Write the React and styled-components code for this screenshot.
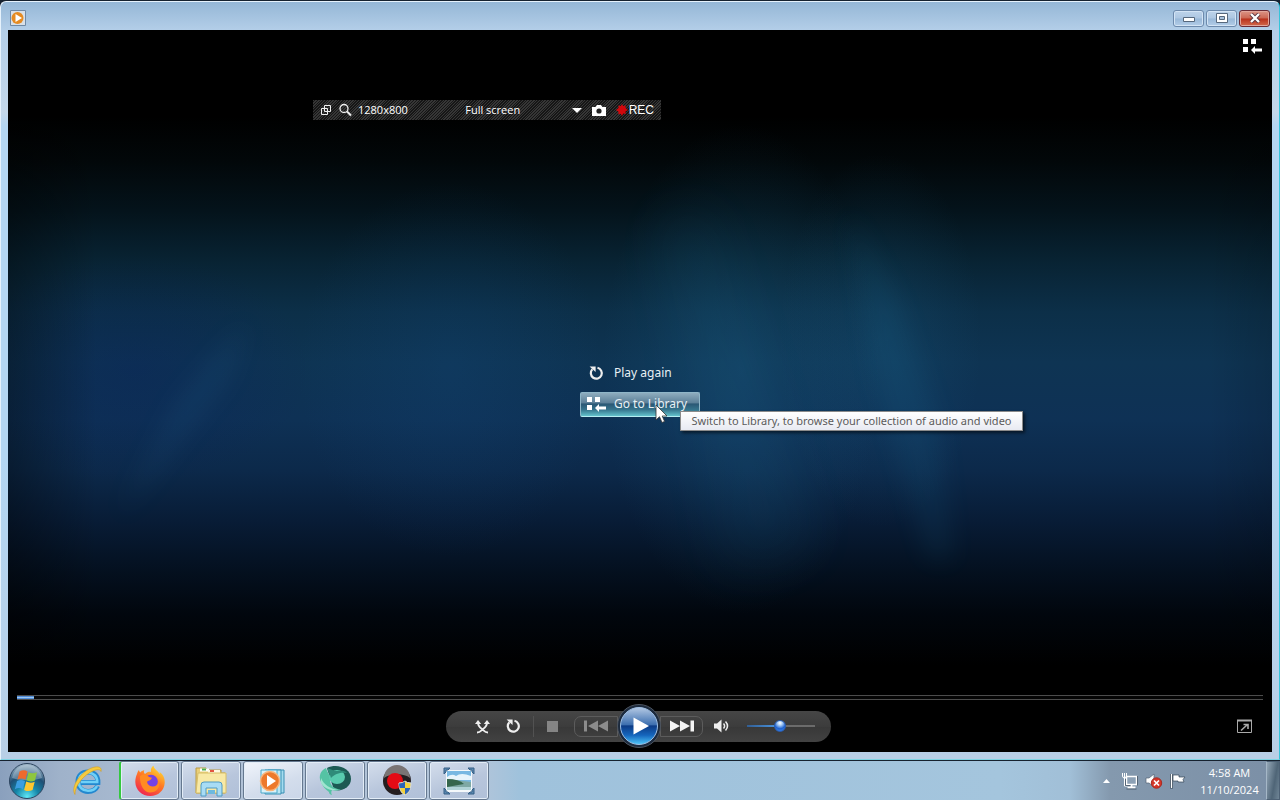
import React from "react";
import styled, { createGlobalStyle } from "styled-components";

const GlobalStyle = createGlobalStyle`
  *, *::before, *::after { box-sizing: border-box; }
  body { margin: 0; background: #1a2432; font-family: "Open Sans", "Noto Sans", sans-serif; }
  button, select, input { font: inherit; color: inherit; }
  button { border: 0; padding: 0; background: none; display: inline-flex; align-items: center; justify-content: center; }
  svg { display: block; flex: none; }
`;

const Desktop = styled.div`
  min-height: 100vh;
  display: flex;
  flex-direction: column;
  background: #16222f;
`;

const Window = styled.main`
  position: relative;
  flex: 1;
  display: flex;
  flex-direction: column;
  margin: 1px 0;
  border: 1px solid #e6f2fc;
  border-right-color: #35c4da;
  border-bottom-color: #7fd4e4;
  border-radius: 6px 6px 0 0;
  padding: 0 7px 7px;
  background: linear-gradient(#95b7d6, #b3cee8 28px, #c4d8ea 110px, #b4d6f2 124px, #b4d6f2 60%, #b8cfe6);
`;

const TitleBar = styled.header`
  display: flex;
  align-items: center;
  justify-content: space-between;
  height: 28px;
  padding: 4px 2px 0;
`;

const CaptionButtons = styled.div`
  display: flex;
  gap: 2px;
`;

const CaptionButton = styled.button`
  width: 31px;
  height: 17px;
  border: 1px solid ${(p) => (p.$close ? "#6b2b35" : "#6d8aac")};
  border-radius: 3px;
  box-shadow: inset 0 0 0 1px ${(p) => (p.$close ? "#e2a69b" : "#d3e4f5")};
  background: ${(p) =>
    p.$close
      ? "linear-gradient(#dc9586, #cc6753 48%, #b9301b 52%, #d26a4c)"
      : "linear-gradient(#bdd3ea, #adc7e2 48%, #98b8d8 52%, #b3cde8)"};
`;

const Player = styled.section`
  position: relative;
  flex: 1;
  display: flex;
  flex-direction: column;
  color: #fff;
  background:
    linear-gradient(90deg, rgba(0, 0, 0, 0.35), transparent 7%, transparent 95%, rgba(0, 0, 0, 0.12)),
    radial-gradient(ellipse 11% 34% at 58% 47%, rgba(30, 105, 145, 0.26), transparent),
    radial-gradient(ellipse 8% 26% at 69% 43%, rgba(30, 105, 150, 0.2), transparent),
    radial-gradient(ellipse 12% 26% at 35% 47%, rgba(18, 72, 125, 0.25), transparent),
    radial-gradient(ellipse 14% 16% at 10% 47%, rgba(8, 28, 92, 0.3), transparent),
    linear-gradient(
      #000 0, #000 12%, #020709 18%, #04131b 25%, #082333 32%, #0c2f48 39%,
      #0e3453 46%, #0e3155 54%, #0c294a 61%, #081c36 68%, #04101f 75%,
      #01060d 81%, #000 88%
    );
`;

const Beams = styled.svg`
  position: absolute;
  inset: 0;
  width: 100%;
  height: 100%;
  pointer-events: none;
`;

const PlayerTop = styled.div`
  display: flex;
  justify-content: flex-end;
  padding: 8px 10px 0;
`;

const Stage = styled.div`
  flex: 1;
  display: flex;
  align-items: center;
  justify-content: center;
  padding-top: 28px;
`;

const EndMenu = styled.nav`
  position: relative;
  display: flex;
  flex-direction: column;
  gap: 6px;
  width: 120px;
`;

const EndMenuItem = styled.button`
  justify-content: flex-start;
  gap: 8px;
  height: 25px;
  padding: 0 0 0 6px;
  border-radius: 2px;
  font-family: "Noto Sans", sans-serif;
  font-size: 12px;
  line-height: 16px;
  white-space: nowrap;
  color: #e8f0f5;
  ${(p) =>
    p.$active &&
    `
    border: 1px solid #8fb6c8;
    border-bottom-color: #b5eef2;
    padding-left: 5px;
    background: linear-gradient(#8eacbe, #5d8199 42%, #2b5875 48%, #35738c 72%, #63c2cc);
  `}
`;

const Slot = styled.span`
  display: flex;
  justify-content: center;
  width: 20px;
`;

const Tooltip = styled.div`
  position: absolute;
  left: 100px;
  top: 50px;
  height: 20px;
  min-width: 343px;
  padding: 0 6px;
  border: 1px solid #8b8b8b;
  background: linear-gradient(#fff, #e8eaf2);
  box-shadow: 2px 2px 3px rgba(0, 0, 0, 0.55);
  color: #5b5b5b;
  font-family: "Noto Sans", sans-serif;
  font-size: 11px;
  line-height: 18px;
  text-align: center;
  white-space: nowrap;
`;

const Pointer = styled.svg`
  position: absolute;
  left: 75px;
  top: 43px;
`;

const Recorder = styled.div`
  position: absolute;
  left: 305px;
  top: 70px;
  display: flex;
  align-items: center;
  width: 348px;
  height: 20px;
  padding: 0 7px;
  gap: 10px;
  font-size: 11px;
  line-height: 16px;
  background: repeating-linear-gradient(135deg, #363636 0 1px, #161616 1px 2px);
`;

const RecorderSize = styled.div`
  display: flex;
  align-items: center;
  gap: 6px;
`;

const Picker = styled.label`
  position: relative;
  flex: 1;
  display: flex;
  align-items: center;
`;

const Select = styled.select`
  flex: 1;
  height: 18px;
  border: 0;
  padding: 0 4px 0 0;
  appearance: none;
  background: transparent;
  text-align: center;
  text-align-last: center;
`;

const RecordButton = styled.button`
  gap: 1px;
  font-family: "Liberation Sans", sans-serif;
  font-size: 12px;
`;

const Seek = styled.input`
  display: block;
  appearance: none;
  height: 5px;
  margin: 0 9px;
  border: solid #4c4c4c;
  border-width: 1px 0;
  background: linear-gradient(#2b6cc4, #9cc8f4 50%, #2f74cf) 0 0 / 17px 100% no-repeat, #050505;
  &::-webkit-slider-thumb { appearance: none; width: 1px; height: 1px; }
`;

const ControlRow = styled.footer`
  display: grid;
  grid-template-columns: 1fr auto 1fr;
  align-items: center;
  height: 52px;
  padding: 0 20px 0 17px;
`;

const Transport = styled.div`
  grid-column: 2;
  display: flex;
  align-items: center;
  width: 385px;
  height: 31px;
  padding: 0 16px 0 27px;
  border-radius: 16px;
  background: linear-gradient(#464646, #3c3c3c 50%, #383838 51%, #424242);
`;

const Control = styled.button`
  width: ${(p) => p.$width || 31}px;
  height: 21px;
`;

const Divider = styled.span`
  width: 1px;
  height: 21px;
  margin: 0 3px 0 1px;
  background: #525252;
`;

const SkipControl = styled(Control)`
  width: 44px;
  margin-left: ${(p) => (p.$next ? 0 : 6)}px;
  border: 1px solid #5c5c5c;
  border-radius: ${(p) => (p.$next ? "0 7px 7px 0" : "7px 0 0 7px")};
`;

const PlayControl = styled.button`
  width: 44px;
  height: 44px;
  margin: 0 -1px;
  border-radius: 50%;
  z-index: 1;
`;

const Volume = styled.input`
  appearance: none;
  width: 68px;
  height: 12px;
  margin: 0 0 0 8px;
  background: linear-gradient(90deg, #315e94, #4e9be8 50%, #6b6b6b 50%) center / 100% 2px no-repeat;
  &::-webkit-slider-thumb {
    appearance: none;
    width: 12px;
    height: 12px;
    border: 1px solid #2a5cae;
    border-radius: 50%;
    background: radial-gradient(circle at 50% 20%, #fff 0, #a9cdf5 25%, #1f62d0 60%, #3f8cf0);
  }
`;

const FullscreenButton = styled.button`
  justify-self: end;
`;

const Taskbar = styled.footer`
  display: flex;
  align-items: center;
  height: 39px;
  background: linear-gradient(90deg, #8aa0bd, #9fb2ca 60px, #b0c1d6 200px, #b2c5da 480px, #9fc2dc 520px, #a4c5dd 1000px, #a1bfd7 1070px, #8499ae 1110px, #7b8fa6);
`;

const StartButton = styled.button`
  width: 54px;
  height: 39px;
`;

const TaskButtons = styled.nav`
  flex: 1;
  display: flex;
  gap: 2px;
  padding-left: 3px;
`;

const TaskButton = styled.button`
  width: 60px;
  height: 39px;
  border-radius: 3px;
  ${(p) =>
    p.$open &&
    `
    border: 1px solid #65788f;
    box-shadow: inset 0 0 0 1px #e3edf7;
    background: linear-gradient(160deg, #d4deec, #b8c6dc 55%, #b0c0d8);
  `}
  ${(p) => p.$active && `background: linear-gradient(160deg, #f1f5fb, #d3ddec 60%, #cad6e8);`}
  ${(p) => p.$progress && `border-left: 2px solid #35c840;`}
`;

const Tray = styled.div`
  display: flex;
  align-items: center;
  gap: 7px;
`;

const TrayExpander = styled.button`
  width: 7px;
  height: 20px;
  margin-right: 4px;
`;

const Glyph = styled.span`
  display: flex;
  justify-content: center;
  width: 17px;
`;

const Clock = styled.time`
  width: 73px;
  text-align: center;
  color: #fff;
  font-size: 11px;
  line-height: 17px;
  white-space: nowrap;
`;

const ShowDesktop = styled.button`
  align-self: stretch;
  width: 14px;
  border: 1px solid #4d6175;
  border-left-color: #a5b7c7;
  background: linear-gradient(100deg, #93a6b6, #4f6577 60%, #6f8596);
`;

const LibraryIcon = () => (
  <svg width="20" height="16" viewBox="0 0 20 16" fill="#fff">
    <path d="M1 1h5v5H1zM9 1h5v5H9zM1 9h5v5H1zM9 12l4-4v2.500h7v3h-7V16z" />
  </svg>
);

const RepeatIcon = () => (
  <svg width="16" height="16" viewBox="0 0 16 16" fill="none" stroke="#eee" strokeWidth="2.200">
    <path d="M9.500 2.800A5.500 5.500 0 1 1 4.400 4.300" />
    <path d="M1.600 1.600h6v5.500z" fill="#eee" stroke="none" />
  </svg>
);

const ShuffleIcon = () => (
  <svg width="15" height="15" viewBox="0 0 15 15" fill="none" stroke="#eee" strokeWidth="1.800">
    <path d="M3 3.500c0 3.500 1.500 4.800 4 6.500 2 1.500 2.500 3.500 6 3.500M12 3.500c0 3.500-1.500 4.800-4 6.500-2 1.500-2.500 3.500-6 3.500" />
    <path d="M0 5 3 1l3.200 4zM8.800 5 12 1l3 4z" fill="#eee" stroke="none" />
  </svg>
);

const PlayOrb = () => (
  <svg width="44" height="44" viewBox="0 0 44 44">
    <defs>
      <linearGradient id="orbFace" x1="0" y1="0" x2="0" y2="1">
        <stop offset="0" stopColor="#b4c9e4" />
        <stop offset=".46" stopColor="#3e70b0" />
        <stop offset=".5" stopColor="#0c3b86" />
        <stop offset=".75" stopColor="#1566bd" />
        <stop offset="1" stopColor="#50c8fa" />
      </linearGradient>
    </defs>
    <circle cx="22" cy="22" r="21.500" fill="#1c2a3d" stroke="#4d5560" />
    <circle cx="22" cy="22" r="18.500" fill="url(#orbFace)" stroke="#9ebfe5" />
    <path d="M16.500 13.500v17L32 22z" fill="#fff" />
  </svg>
);

const SkipIcon = ({ next }) => (
  <svg width="24" height="12" viewBox="0 0 24 12" fill={next ? "#f4f4f4" : "#8c8c8c"}>
    {next ? <path d="M0 .5 10 6 0 11.500zM10 .5 20 6l-10 5.500zM20.500.5H24v11h-3.500z" /> : <path d="M24 .5 14 6l10 5.500zM14 .5 4 6l10 5.500zM0 .5h3v11H0z" />}
  </svg>
);

const SpeakerIcon = () => (
  <svg width="16" height="14" viewBox="0 0 16 14" fill="#eee">
    <path d="M1 4.500h3L8.500.5v13L4 9.500H1z" />
    <path d="M10.500 4.500c1.300 1.500 1.300 3.500 0 5M12.500 2.500c2.400 2.700 2.400 6.300 0 9" fill="none" stroke="#eee" strokeWidth="1.500" />
  </svg>
);

const StartOrb = () => (
  <svg width="38" height="38" viewBox="0 0 38 38">
    <defs>
      <radialGradient id="startFace" cx=".5" cy=".95" r=".95">
        <stop offset="0" stopColor="#5fe8f6" />
        <stop offset=".35" stopColor="#1586a8" />
        <stop offset=".65" stopColor="#1f4f74" />
        <stop offset="1" stopColor="#a9bfd0" />
      </radialGradient>
    </defs>
    <circle cx="19" cy="19" r="17.500" fill="url(#startFace)" stroke="#2d4560" />
    <path d="M4 16C6 7 12 3 19 3s13 4 15 13c-9 3-21 3-30 0z" fill="#dce8ef" opacity=".34" />
    <path d="M11.500 9.500q4.500-2.400 8 0l-2.100 8.200q-4-2.200-8 0z" fill="#ee6a2d" />
    <path d="M20.500 10.300q4 2 8.500 0L27 18.500q-4.400 2-8.500-.2z" fill="#8ec63e" />
    <path d="M9 19q4-2 8 0l-2.100 8.200q-4-2.200-8 0z" fill="#3b9ee0" />
    <path d="M18.200 19.600q4.200 2.200 8.500.2L24.600 28q-4.400 2.200-8.500-.1z" fill="#fdc72f" />
  </svg>
);

const ExplorerEIcon = () => (
  <svg width="32" height="32" viewBox="0 0 32 32" fill="none">
    <path d="M26.500 21c-1.600 3.500-4.900 5.500-9.500 5.500-5.800 0-10-4-10-10S11 7 17 7s10.200 4 9.900 10.500H10" stroke="#2388cf" strokeWidth="5" />
    <path d="M26 21c-1.600 3.200-4.500 4.800-9 4.800-5.300 0-9.300-3.600-9.300-9.300S11.500 7.700 17 7.700c5.600 0 9.400 3.600 9.200 9.300H10" stroke="#6fd0f7" strokeWidth="2.600" />
    <path d="M4 29.500C-1 22 10 6 22 2.500c5.400-1.500 9-.5 8 4-.5-2.200-3.500-2.400-7.500-.8C13 9.500 3.500 21 4 29.500z" fill="#f5cb3e" stroke="#d49c1e" strokeWidth=".6" />
  </svg>
);

const FirefoxIcon = () => (
  <svg width="32" height="32" viewBox="0 0 32 32">
    <defs>
      <linearGradient id="fox" x1=".8" y1="0" x2=".2" y2="1">
        <stop offset="0" stopColor="#ffe335" />
        <stop offset=".45" stopColor="#ff7b24" />
        <stop offset="1" stopColor="#ef1f55" />
      </linearGradient>
    </defs>
    <path d="M3 9c.6-2.300 1.500-3.400 2-4 .2 1.300.7 2 1.300 2.500 1-1.200 2.500-2 4-2.400C9.500 7 10 8.200 11 9c2-2 4-2.400 6-2.100C16.500 4.300 17.500 2 19.500.8c.5 3 2.500 4 4 5.400 1 .9 1.800 2 2.300 3.100.2-.7 0-1.600-.2-2.200C29 9.600 31 13 30.700 18c-.5 7.600-6.500 13-14.400 13C8 31 1.500 25 1.300 17 1.300 14 2 11 3 9z" fill="url(#fox)" />
    <circle cx="17" cy="16.500" r="6.800" fill="#7542e5" />
    <path d="M6 11c2.500-2.300 6-2 8 .3 1 1 2.600 1.200 4 1.400-1 2.600-3 2.600-4.600 3.600-1 2 1.800 5.200 5 5.200 3.600 0 5.600-2 6.500-4 1.300 6-3 10-8.800 10C10 27.500 5.600 20 6 11z" fill="#ff8b22" />
  </svg>
);

const FolderIcon = () => (
  <svg width="34" height="32" viewBox="0 0 34 32">
    <path d="M2 28V3h10l2 2h13v3h4v20z" fill="#e9cf78" stroke="#b89a42" />
    <path d="M6 3.500h9v3H6z" fill="#fff" />
    <path d="M8 3.500h4v2H8z" fill="#4caf50" />
    <path d="M14 5h12v3H14z" fill="#fff8df" />
    <path d="M16 5h4v2h-4z" fill="#e35540" />
    <path d="M4 8h28v20H2z" fill="#f8e9a5" stroke="#d7be69" />
    <path d="M7 31V20q0-3 3-3h15q3 0 3 3v11h-5v-8H12v8z" fill="#a8dcf5" stroke="#4e9ac4" />
    <path d="M14 25h7v4h-7z" fill="#6db9df" />
  </svg>
);

const MediaIcon = () => (
  <svg width="32" height="32" viewBox="0 0 32 32">
    <path d="M11 5h16v23H11z" fill="#a5dcef" stroke="#398fb3" />
    <path d="M8 5h16v24H8z" fill="#b9e7f5" stroke="#398fb3" />
    <path d="M4 5h16v23H4z" fill="#d9f2fa" stroke="#4ba8ca" />
    <circle cx="13" cy="16" r="9.500" fill="#ed792b" stroke="#f8b57c" strokeWidth="1.500" />
    <path d="M10 10v12l9-6z" fill="#fff" />
  </svg>
);

const TealIcon = () => (
  <svg width="34" height="34" viewBox="0 0 34 34">
    <path d="M9 4c10-5 24 0 24 11 0 8-9 13-17 11z" fill="#1c5a53" />
    <path d="M8 4C3 6 0 12 3 18c1.500 4 4 7 8 10 0 1.500 1 2.500 3 3-1-2-1-3 0-5 3 .8 6 .8 9-.5-7-.5-11-4-11-9.500C12 10 9 8 8 4z" fill="#55c3a4" />
    <path d="M3 14c3 7 9 11 18 12-6 1-14-.5-18-7z" fill="#9fe5cf" />
    <ellipse cx="19" cy="13" rx="8" ry="7" fill="#58cbae" />
    <path d="M9 4c4 1 7 3 10 3s7-1 10 2c-5-1-12 0-16 5-1-4-3-6-4-10z" fill="#2f8b79" />
  </svg>
);

const CaptureIcon = () => (
  <svg width="34" height="34" viewBox="0 0 34 34">
    <circle cx="17" cy="17" r="14" fill="#241e20" />
    <path d="M4 14a13 13 0 0 1 26 0C24 9 11 9 4 14z" fill="#7a7474" />
    <circle cx="15" cy="17" r="8" fill="#e40b15" />
    <path d="M19 19q4 0 6-2 2 2 6 2c0 6-2 10-6 12-4-2-6-6-6-12z" fill="#f4d33b" stroke="#d8dce0" />
    <path d="M25 17.500V24h-5.300c-.5-1.300-.7-3-.7-4.500q4 0 6-2zM25 24h5.300c-.9 3-2.500 5-5.300 6.500z" fill="#2a65bb" />
  </svg>
);

const PhotoIcon = () => (
  <svg width="32" height="28" viewBox="0 0 32 28">
    <path d="M3 3h26v22H3z" fill="#f4f8fa" />
    <path d="M4 4h24v19H4z" fill="#78b8e2" />
    <path d="M4 10q5-4 9-1 5-4 15 0v4H4z" fill="#e7f4fb" />
    <path d="M4 12q7 1 24 3v8H4z" fill="#7ea8a4" />
    <path d="M4 12q12 0 17 5L4 20z" fill="#35664c" />
    <path d="M4 20h24v3H4z" fill="#b2d4d8" />
    <path d="M1 7V1h6L5 3H3v2zM31 7V1h-6l2 2h2v2zM1 21v6h6l-2-2H3v-2zM31 21v6h-6l2-2h2v-2z" fill="#5c89b0" stroke="#345e85" />
  </svg>
);

const tasks = [
  { name: "Internet Explorer", Icon: ExplorerEIcon },
  { name: "Firefox", Icon: FirefoxIcon, open: true, progress: true },
  { name: "File Explorer", Icon: FolderIcon, open: true },
  { name: "Media Player", Icon: MediaIcon, open: true, active: true },
  { name: "Remote viewer", Icon: TealIcon, open: true },
  { name: "Screen recorder", Icon: CaptureIcon, open: true },
  { name: "Photos", Icon: PhotoIcon, open: true },
];

export default function App() {
  return (
    <Desktop>
      <GlobalStyle />
      <Window>
        <TitleBar>
          <svg width="16" height="16" viewBox="0 0 16 16">
            <path d="M.5.500h15v15H.500z" fill="#d8e0e8" stroke="#6f8aa6" />
            <circle cx="7.500" cy="8" r="6" fill="#e58b22" />
            <path d="M5.500 4v8l6.500-4z" fill="#fff" />
          </svg>
          <CaptionButtons>
            <CaptionButton aria-label="Minimize">
              <svg width="12" height="10" viewBox="0 0 12 10"><path d="M.5 4.500h11v4H.500z" fill="#fff" stroke="#56687d" /></svg>
            </CaptionButton>
            <CaptionButton aria-label="Maximize">
              <svg width="12" height="10" viewBox="0 0 12 10"><path d="M.5.500h11v9H.500z" fill="#fff" stroke="#56687d" /><path d="M3.500 3.500h5v3h-5z" fill="#a8c1db" stroke="#56687d" /></svg>
            </CaptionButton>
            <CaptionButton $close aria-label="Close">
              <svg width="12" height="10" viewBox="0 0 12 10"><path d="m2 1 8 8M10 1 2 9" stroke="#5a3540" strokeWidth="4" /><path d="m2 1 8 8M10 1 2 9" stroke="#fff" strokeWidth="2.300" /></svg>
            </CaptionButton>
          </CaptionButtons>
        </TitleBar>

        <Player>
          <Beams viewBox="0 0 1264 722" preserveAspectRatio="none">
            <defs>
              <filter id="soften" x="-60%" y="-30%" width="220%" height="160%"><feGaussianBlur stdDeviation="26" /></filter>
              <filter id="edge" x="-100%" y="-30%" width="300%" height="160%"><feGaussianBlur stdDeviation="12" /></filter>
            </defs>
            <path d="M650 190 700 180 810 520 720 540Z" fill="#2579a4" opacity=".08" filter="url(#soften)" />
            <path d="M840 180 890 270 930 390 945 530 920 530 865 340Z" fill="#2482ad" opacity=".1" filter="url(#edge)" />
            <path d="M240 290 220 350 110 490 170 370Z" fill="#2a7099" opacity=".14" filter="url(#edge)" />
          </Beams>
          <PlayerTop>
            <button aria-label="Switch to Library"><LibraryIcon /></button>
          </PlayerTop>
          <Stage>
            <EndMenu>
              <EndMenuItem><Slot><RepeatIcon /></Slot>Play again</EndMenuItem>
              <EndMenuItem $active><Slot><LibraryIcon /></Slot>Go to Library</EndMenuItem>
              <Tooltip role="tooltip">Switch to Library, to browse your collection of audio and video</Tooltip>
              <Pointer width="13" height="20" viewBox="0 0 13 20">
                <path d="M1 1v15l3.500-3.300L7 18.500l2.600-1.100L7.200 12H12z" fill="#fff" stroke="#333" strokeWidth=".8" />
              </Pointer>
            </EndMenu>
          </Stage>
          <Seek type="range" min="0" max="100" defaultValue="1" aria-label="Seek" />
          <ControlRow>
            <Transport>
              <Control $width={20} aria-label="Shuffle"><ShuffleIcon /></Control>
              <Control $width={40} aria-label="Repeat"><RepeatIcon /></Control>
              <Divider />
              <Control $width={31} aria-label="Stop">
                <svg width="11" height="11" viewBox="0 0 11 11"><path d="M0 0h11v11H0z" fill="#858585" /></svg>
              </Control>
              <SkipControl aria-label="Previous"><SkipIcon /></SkipControl>
              <PlayControl aria-label="Play"><PlayOrb /></PlayControl>
              <SkipControl $next aria-label="Next"><SkipIcon next /></SkipControl>
              <Control $width={36} aria-label="Mute"><SpeakerIcon /></Control>
              <Volume type="range" min="0" max="100" defaultValue="49" aria-label="Volume" />
            </Transport>
            <FullscreenButton aria-label="View full screen">
              <svg width="15" height="14" viewBox="0 0 15 14" fill="none" stroke="#aaa">
                <path d="M.5 1.500h14v12H.500z" />
                <path d="M0 1.500h15" strokeWidth="2" />
                <path d="M4 11.500 10 6M6.500 5.500H11V10" strokeWidth="1.600" />
              </svg>
            </FullscreenButton>
          </ControlRow>

          <Recorder>
            <RecorderSize>
              <svg width="12" height="12" viewBox="0 0 12 12" fill="none" stroke="#eee"><path d="M4.500 1.500h6v6h-6zM1.500 4.500h6v6h-6z" /></svg>
              <svg width="14" height="14" viewBox="0 0 14 14" fill="none" stroke="#eee"><circle cx="6" cy="5.500" r="4" strokeWidth="1.300" /><path d="m9 8.500 4 4" strokeWidth="2" /></svg>
              <span>1280x800</span>
            </RecorderSize>
            <Picker>
              <Select aria-label="Capture area" defaultValue="full"><option value="full">Full screen</option></Select>
              <svg width="10" height="5" viewBox="0 0 10 5"><path d="M0 0h10L5 5z" fill="#fff" /></svg>
            </Picker>
            <button aria-label="Take snapshot">
              <svg width="14" height="11" viewBox="0 0 14 11"><path d="M0 2h3.500L5 0h4l1.500 2H14v9H0z" fill="#fff" /><circle cx="7" cy="6" r="2.600" fill="#222" /></svg>
            </button>
            <RecordButton>
              <svg width="12" height="12" viewBox="0 0 12 12"><path d="m6 0 1.200 2 2.500-.8-.3 2.600L12 6l-2.600 1.500.3 2.600-2.500-.6L6 12l-1.300-2.300-2.400.5.300-2.500L0 6l2.600-2-.3-2.500 2.400.6z" fill="#d0070c" /></svg>
              REC
            </RecordButton>
          </Recorder>
        </Player>
      </Window>

      <Taskbar>
        <StartButton aria-label="Start"><StartOrb /></StartButton>
        <TaskButtons>
          {tasks.map(({ name, Icon, open, active, progress }) => (
            <TaskButton key={name} aria-label={name} $open={open} $active={active} $progress={progress}><Icon /></TaskButton>
          ))}
        </TaskButtons>
        <Tray>
          <TrayExpander aria-label="Show hidden icons">
            <svg width="7" height="4" viewBox="0 0 7 4"><path d="M3.500 0 7 4H0z" fill="#fff" /></svg>
          </TrayExpander>
          <Glyph>
            <svg width="18" height="18" viewBox="0 0 18 18" fill="none" stroke="#344353">
              <path d="M5.500 4.500h10v8h-10z" fill="#8da1b5" stroke="#fff" strokeWidth="1.500" />
              <path d="M10.500 13v2M6.500 15.500h8" stroke="#fff" strokeWidth="1.800" />
              <path d="M1.500 1v3q0 2 2 2t2-2V1M3.500 1v13h3" stroke="#fff" />
              <path d="M4.500 7v6.500h5M16.500 4v9.500M5.500 17h10" strokeWidth=".7" />
            </svg>
          </Glyph>
          <Glyph>
            <svg width="18" height="16" viewBox="0 0 18 16"><path d="M1 5h3l5-4v13l-5-4H1z" fill="#fff" stroke="#536273" strokeWidth=".7" /><circle cx="11.500" cy="10" r="5.200" fill="#d53427" stroke="#a82a22" /><path d="m9 7.500 5 5M14 7.500l-5 5" stroke="#fff" strokeWidth="1.700" /></svg>
          </Glyph>
          <Glyph>
            <svg width="16" height="16" viewBox="0 0 16 16"><path d="M1.500 1v14.500" stroke="#354658" strokeWidth="3" /><path d="M1.500 1v14" stroke="#fff" strokeWidth="1.400" /><path d="M3 2h6v2h6l-2 2.500L14 9H8V8H3z" fill="#fff" stroke="#354658" strokeWidth=".7" /></svg>
          </Glyph>
          <Clock>4:58 AM<br />11/10/2024</Clock>
        </Tray>
        <ShowDesktop aria-label="Show desktop" />
      </Taskbar>
    </Desktop>
  );
}
